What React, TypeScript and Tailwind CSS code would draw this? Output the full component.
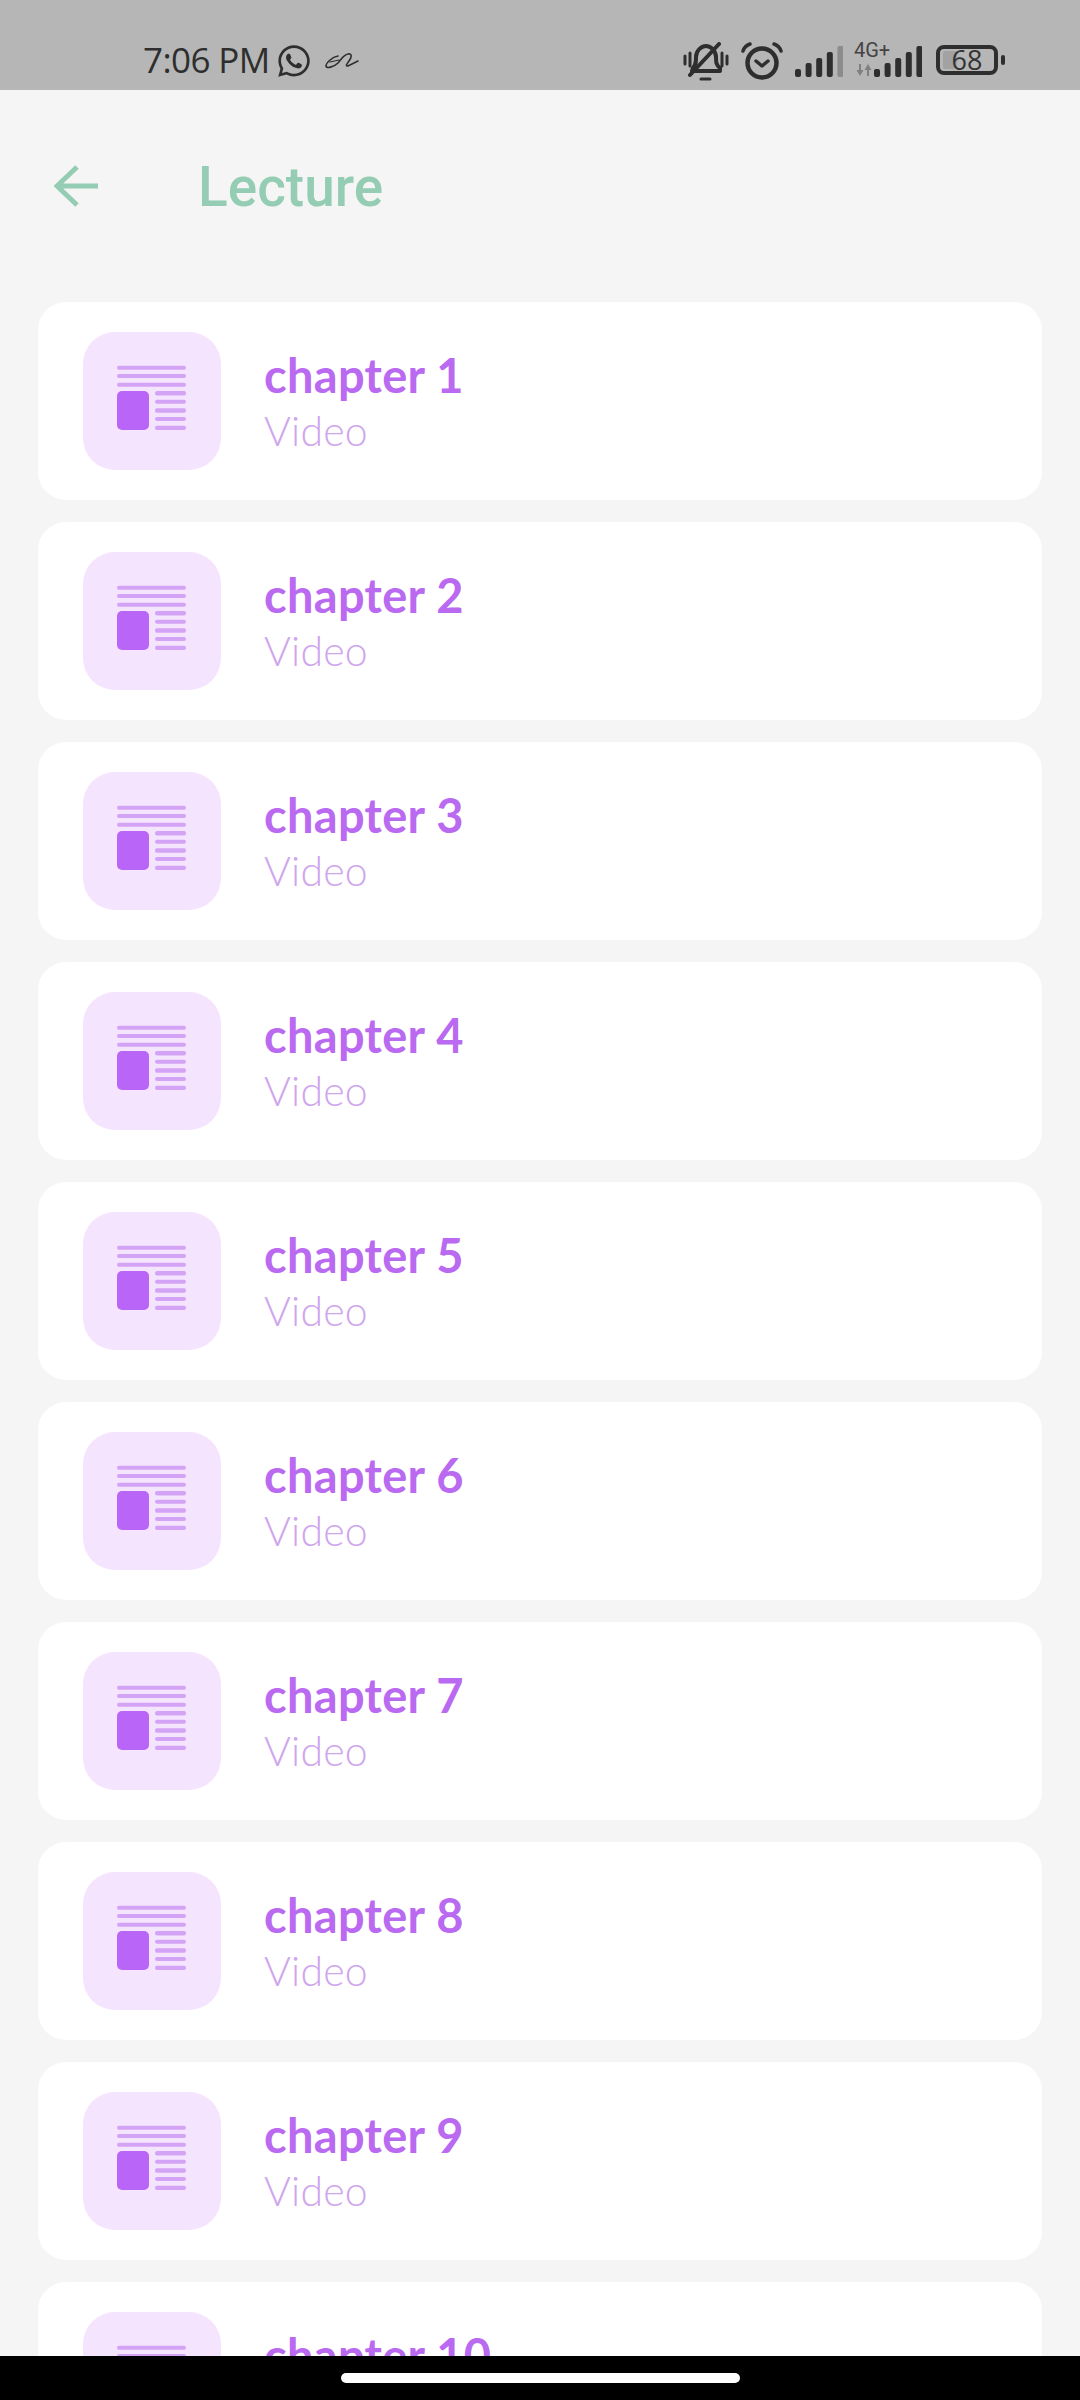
import { FaWhatsapp } from "react-icons/fa";

const chapters = [1, 2, 3, 4, 5, 6, 7, 8, 9, 10];

function Bars({ dimLast }: { dimLast?: boolean }) {
  const heights = [8, 14, 19, 25, 31];
  return (
    <svg width="48" height="32" viewBox="0 0 48 32" className="block">
      {heights.map((h, i) => (
        <rect
          key={h}
          x={i * 10.6}
          y={32 - h}
          width="6"
          height={h}
          rx="2"
          fill={dimLast && i === 4 ? "#8c8c8c" : "#2e2e2e"}
        />
      ))}
    </svg>
  );
}

function StatusBar() {
  return (
    <div className="h-[90px] bg-[#b6b6b6] flex items-start justify-between pl-[143px] pr-[75px] pt-[42px] text-[#2e2e2e]">
      <div className="flex items-center h-[36px]">
        <span className="text-[35px] leading-[36px] font-medium font-['Open_Sans',sans-serif] tracking-[-0.6px]">7:06 PM</span>
        <FaWhatsapp className="ml-[6px] w-[36px] h-[36px] mt-[2px]" />
        <svg width="34" height="20" viewBox="0 0 34 20" fill="none" className="ml-[13px] mt-[2px]">
          <path
            d="M13 5C7 6 1 12 1 15c0 3 8 1 12-3 3-3 5-8 10-9 4-1 4 3 1 7-2 3-4 5-1 5l10-5"
            stroke="#2e2e2e"
            strokeWidth="1.6"
            strokeLinecap="round"
          />
          <path d="M5 11l9-2" stroke="#2e2e2e" strokeWidth="1.2" strokeLinecap="round" />
        </svg>
      </div>
      <div className="flex items-start">
        <svg width="46" height="40" viewBox="0 0 46 40" fill="none" stroke="#2e2e2e" strokeLinecap="round" className="block">
          <path d="M10 26c3-3 3-6 3-11 0-6 5-11 10-11s10 5 10 11c0 5 0 8 4 11v3H9z" strokeWidth="4" strokeLinejoin="round" />
          <path d="M7 33L36 2" strokeWidth="4" />
          <path d="M2 14v8M7 11v13M39 11v13M44 14v8" strokeWidth="3" />
          <path d="M18 37h9" strokeWidth="3" />
        </svg>
        <svg width="42" height="38" viewBox="0 0 42 38" fill="none" stroke="#2e2e2e" strokeLinecap="round" strokeLinejoin="round" className="ml-[12px] block">
          <circle cx="21" cy="21" r="14.5" strokeWidth="4.5" />
          <path d="M15 19l6 5 6-5" strokeWidth="3.5" />
          <path d="M2 9c1-3 4-6 7-7M40 9c-1-3-4-6-7-7" strokeWidth="3.5" />
        </svg>
        <div className="ml-[12px] mt-[3px]">
          <Bars dimLast />
        </div>
        <div className="ml-[11px] relative w-[68px] h-[36px]">
          <span className="absolute left-0 top-[-1px] text-[20px] leading-[18px] text-[#444444] font-['Roboto',sans-serif]">4G+</span>
          <svg width="16" height="12" viewBox="0 0 16 12" className="absolute left-[2px] top-[22px]">
            <path d="M5 0v6h2.5L4 12 0.5 6H3V0zM11 12V6H8.500L12 0l3.500 6H13v6z" fill="#808080" />
          </svg>
          <div className="absolute left-[20px] top-[3px]">
            <Bars />
          </div>
        </div>
        <div className="ml-[14px] mt-[3px] w-[62px] h-[30px] rounded-[8px] border-[4px] border-[#2e2e2e] flex items-center justify-center relative">
          <div className="absolute left-[3px] top-[2px] bottom-[2px] w-[14px] bg-[#a2a2a2] rounded-[2px]" />
          <span className="relative text-[27px] leading-[26px] text-[#333333] font-['Open_Sans',sans-serif]">68</span>
        </div>
        <div className="ml-[3px] mt-[13px] w-[4px] h-[10px] bg-[#2e2e2e] rounded-[2px]" />
      </div>
    </div>
  );
}

function ChapterIcon() {
  return (
    <div className="w-[138px] h-[138px] shrink-0 rounded-[32px] bg-[#f5e4fd] flex items-center justify-center pb-[7px] pr-[2px]">
      <svg width="69" height="65" viewBox="0 0 69 65" fill="#d3a3f5">
        <rect x="0" y="0.7" width="69" height="4" rx="2" />
        <rect x="0" y="9" width="69" height="4" rx="2" />
        <rect x="0" y="17.700" width="69" height="4" rx="2" />
        <rect x="0" y="26" width="32" height="39" rx="5" fill="#b966f8" />
        <rect x="38" y="26" width="31" height="4.500" rx="2" />
        <rect x="38" y="34.700" width="31" height="4" rx="2" />
        <rect x="38" y="43.300" width="31" height="4.500" rx="2" />
        <rect x="38" y="52" width="31" height="4" rx="2" />
        <rect x="38" y="60.700" width="31" height="4.300" rx="2" />
      </svg>
    </div>
  );
}

export default function App() {
  return (
    <div className="w-[1080px] h-[2400px] flex flex-col bg-[#f5f5f5] overflow-hidden">
      <StatusBar />
      <main className="flex-1 min-h-0 overflow-hidden">
        <header className="h-[192px] flex items-center pl-[54px] mb-[20px]">
          <svg width="44" height="44" viewBox="0 0 44 44" fill="none" stroke="#94cdb3" strokeWidth="5" className="block">
            <path d="M44 22H4M23 3L3 22l20 19" />
          </svg>
          <h1 className="ml-[100px] mt-[2px] text-[55px] leading-[60px] font-medium text-[#94cdb3] font-['Roboto',sans-serif]">Lecture</h1>
        </header>
        <ul className="flex flex-col gap-[22px] px-[38px]">
          {chapters.map((n) => (
            <li key={n} className="h-[198px] shrink-0 bg-white rounded-[28px] flex items-center pl-[45px]">
              <ChapterIcon />
              <div className="ml-[43px] pt-[2px] flex flex-col">
                <span className="text-[47px] leading-[56px] font-bold tracking-[0.3px] text-[#b96af0] font-['Lato',sans-serif]">chapter {n}</span>
                <span className="mt-[2px] text-[41px] leading-[52px] font-light tracking-[0.2px] text-[#cfa5ec] font-['Lato',sans-serif]">Video</span>
              </div>
            </li>
          ))}
        </ul>
      </main>
      <div className="h-[44px] bg-black flex justify-center pt-[17px]">
        <div className="w-[399px] h-[10px] bg-white rounded-full" />
      </div>
    </div>
  );
}
